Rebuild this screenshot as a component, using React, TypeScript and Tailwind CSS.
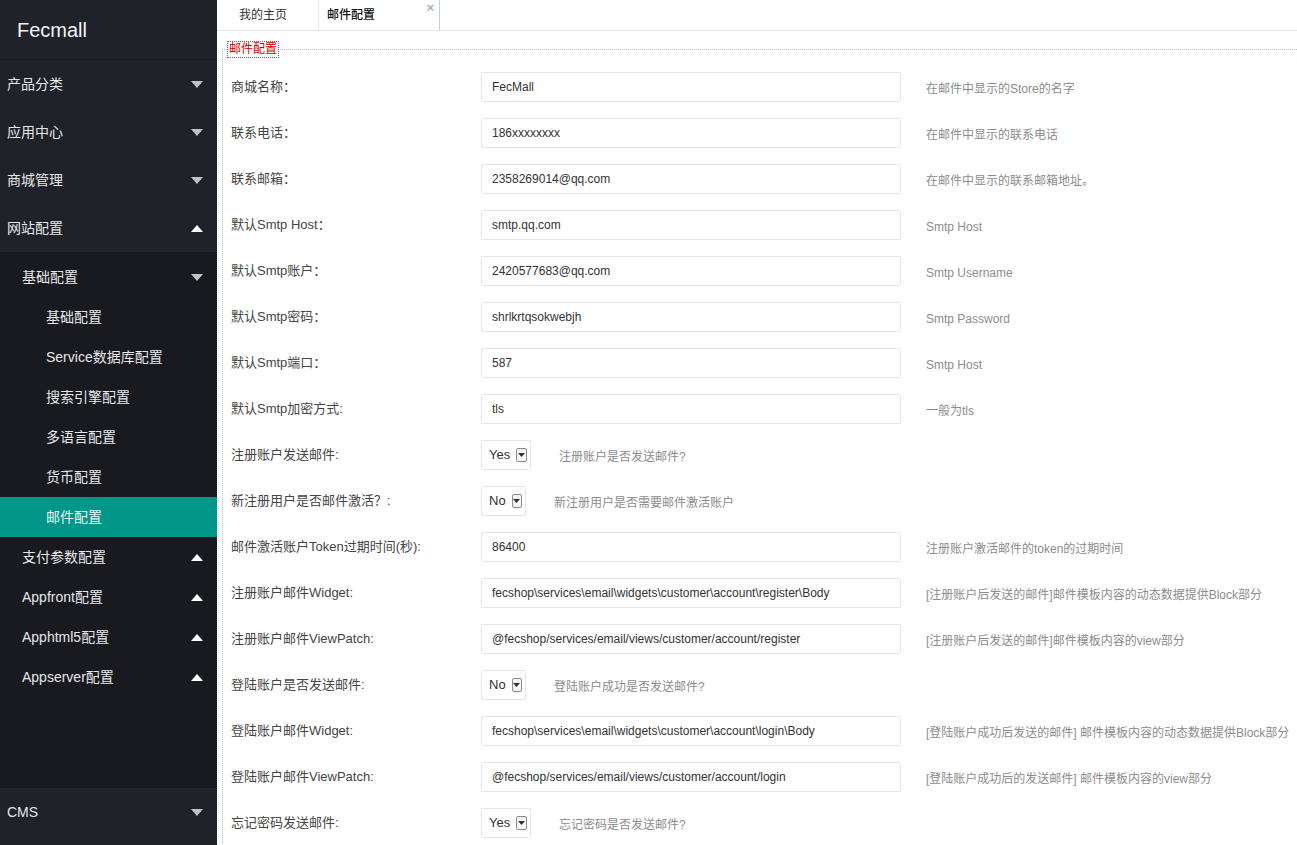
import React from "react";

type Row = {
  label: string;
  kind: "input" | "select";
  value: string;
  hint: string;
};

const rows: Row[] = [
  { label: "商城名称：", kind: "input", value: "FecMall", hint: "在邮件中显示的Store的名字" },
  { label: "联系电话：", kind: "input", value: "186xxxxxxxx", hint: "在邮件中显示的联系电话" },
  { label: "联系邮箱：", kind: "input", value: "2358269014@qq.com", hint: "在邮件中显示的联系邮箱地址。" },
  { label: "默认Smtp Host：", kind: "input", value: "smtp.qq.com", hint: "Smtp Host" },
  { label: "默认Smtp账户：", kind: "input", value: "2420577683@qq.com", hint: "Smtp Username" },
  { label: "默认Smtp密码：", kind: "input", value: "shrlkrtqsokwebjh", hint: "Smtp Password" },
  { label: "默认Smtp端口：", kind: "input", value: "587", hint: "Smtp Host" },
  { label: "默认Smtp加密方式:", kind: "input", value: "tls", hint: "一般为tls" },
  { label: "注册账户发送邮件:", kind: "select", value: "Yes", hint: "注册账户是否发送邮件?" },
  { label: "新注册用户是否邮件激活？:", kind: "select", value: "No", hint: "新注册用户是否需要邮件激活账户" },
  { label: "邮件激活账户Token过期时间(秒):", kind: "input", value: "86400", hint: "注册账户激活邮件的token的过期时间" },
  {
    label: "注册账户邮件Widget:",
    kind: "input",
    value: "fecshop\\services\\email\\widgets\\customer\\account\\register\\Body",
    hint: "[注册账户后发送的邮件]邮件模板内容的动态数据提供Block部分",
  },
  {
    label: "注册账户邮件ViewPatch:",
    kind: "input",
    value: "@fecshop/services/email/views/customer/account/register",
    hint: "[注册账户后发送的邮件]邮件模板内容的view部分",
  },
  { label: "登陆账户是否发送邮件:", kind: "select", value: "No", hint: "登陆账户成功是否发送邮件?" },
  {
    label: "登陆账户邮件Widget:",
    kind: "input",
    value: "fecshop\\services\\email\\widgets\\customer\\account\\login\\Body",
    hint: "[登陆账户成功后发送的邮件] 邮件模板内容的动态数据提供Block部分",
  },
  {
    label: "登陆账户邮件ViewPatch:",
    kind: "input",
    value: "@fecshop/services/email/views/customer/account/login",
    hint: "[登陆账户成功后的发送邮件] 邮件模板内容的view部分",
  },
  { label: "忘记密码发送邮件:", kind: "select", value: "Yes", hint: "忘记密码是否发送邮件?" },
];

function Tri({ up, light }: { up?: boolean; light?: boolean }) {
  return (
    <svg width="12" height="7" viewBox="0 0 12 7" className="shrink-0">
      {up ? (
        <polygon points="0,7 12,7 6,0" fill={light ? "#ffffff" : "#c2c2c2"} />
      ) : (
        <polygon points="0,0 12,0 6,7" fill={light ? "#ffffff" : "#c2c2c2"} />
      )}
    </svg>
  );
}

function TopItem({ text, up }: { text: string; up?: boolean }) {
  return (
    <div className="h-[48px] flex items-center justify-between pl-[7px] pr-[14px] text-[14px] text-[#e6e6e6]">
      <span>{text}</span>
      <Tri up={up} light={up} />
    </div>
  );
}

function SubItem({ text, up }: { text: string; up?: boolean }) {
  return (
    <div className="h-[40px] flex items-center justify-between pl-[22px] pr-[14px] text-[14px] text-[#e6e6e6]">
      <span>{text}</span>
      <Tri up={up} light={up} />
    </div>
  );
}

function Leaf({ text, active }: { text: string; active?: boolean }) {
  return (
    <div
      className={
        active
          ? "h-[40px] flex items-center pl-[46px] text-[14px] text-[#e8f6f4] bg-[#009688]"
          : "h-[40px] flex items-center pl-[46px] text-[14px] text-[#e6e6e6]"
      }
    >
      {text}
    </div>
  );
}

function Sidebar() {
  return (
    <div className="w-[217px] shrink-0 h-[845px] flex flex-col bg-[#20222a]">
      <div className="h-[60px] flex items-center pl-[17px] text-[20px] text-[#eef3f6] border-b border-[#1b1d24]">
        Fecmall
      </div>
      <TopItem text="产品分类" />
      <TopItem text="应用中心" />
      <TopItem text="商城管理" />
      <TopItem text="网站配置" up />
      <div className="h-[536px] bg-[#191a20] pt-[5px] flex flex-col">
        <SubItem text="基础配置" />
        <Leaf text="基础配置" />
        <Leaf text="Service数据库配置" />
        <Leaf text="搜索引擎配置" />
        <Leaf text="多语言配置" />
        <Leaf text="货币配置" />
        <Leaf text="邮件配置" active />
        <SubItem text="支付参数配置" up />
        <SubItem text="Appfront配置" up />
        <SubItem text="Apphtml5配置" up />
        <SubItem text="Appserver配置" up />
      </div>
      <TopItem text="CMS" />
      <div className="flex-1" />
    </div>
  );
}

function SelectBox({ value }: { value: string }) {
  return (
    <div
      className={
        (value === "Yes" ? "w-[50px]" : "w-[45px]") +
        " h-[30px] shrink-0 border border-[#e6e6e6] rounded-[2px] bg-white flex items-center pl-[7px] pr-[3px] gap-[6px] text-[13px] text-[#333]"
      }
    >
      <span>{value}</span>
      <span className="w-[14px] h-[14px] border border-[#8a8a8a] rounded-[2px] flex items-center justify-center bg-[#f6f6f6]">
        <svg width="7" height="4" viewBox="0 0 7 4">
          <polygon points="0,0 7,0 3.5,4" fill="#333" />
        </svg>
      </span>
    </div>
  );
}

function FormRow({ row }: { row: Row }) {
  return (
    <div className="h-[46px] flex items-center">
      <div className="w-[250px] shrink-0 text-[13px] text-[#444]">{row.label}</div>
      {row.kind === "input" ? (
        <>
          <div className="w-[420px] h-[30px] shrink-0 border border-[#e6e6e6] rounded-[2px] bg-white flex items-center pl-[10px] text-[12px] text-[#333] whitespace-nowrap overflow-hidden">
            {row.value}
          </div>
          <div className="ml-[25px] mt-[4px] text-[12px] text-[#8c8c8c] whitespace-nowrap">{row.hint}</div>
        </>
      ) : (
        <>
          <SelectBox value={row.value} />
          <div className="ml-[28px] mt-[4px] text-[12px] text-[#8c8c8c] whitespace-nowrap">{row.hint}</div>
        </>
      )}
    </div>
  );
}

function Main() {
  return (
    <div className="flex-1 h-[845px] overflow-hidden bg-white flex flex-col">
      <div className="h-[31px] shrink-0 flex border-b border-[#e6e6e6]">
        <div className="w-[102px] h-full flex items-center pl-[22px] text-[12px] text-[#333] border-r border-[#e6e6e6]">
          我的主页
        </div>
        <div className="w-[121px] h-full flex items-center justify-between pl-[8px] pr-[5px] text-[12px] text-[#111] border-r border-[#c2d0d8]">
          <span className="font-medium">邮件配置</span>
          <span className="self-start mt-[1px] text-[13px] leading-[14px] font-bold text-[#9bb4be]">×</span>
        </div>
      </div>
      <div className="pt-[10px] pl-[5px]">
        <fieldset className="border-t border-l border-dotted border-[#a9c5cc] pl-[8px] m-0">
          <legend className="-ml-[4px] px-[1px] border border-dotted border-[#009688] text-[12px] leading-[15px] text-[#d40000]">
            邮件配置
          </legend>
          <div className="flex flex-col pt-[6px]">
            {rows.map((r, i) => (
              <FormRow key={i} row={r} />
            ))}
          </div>
        </fieldset>
      </div>
    </div>
  );
}

export default function App() {
  return (
    <div
      className="w-[1297px] h-[845px] flex overflow-hidden"
      style={{ fontFamily: '"Liberation Sans", "Noto Sans CJK SC", sans-serif' }}
    >
      <Sidebar />
      <Main />
    </div>
  );
}
